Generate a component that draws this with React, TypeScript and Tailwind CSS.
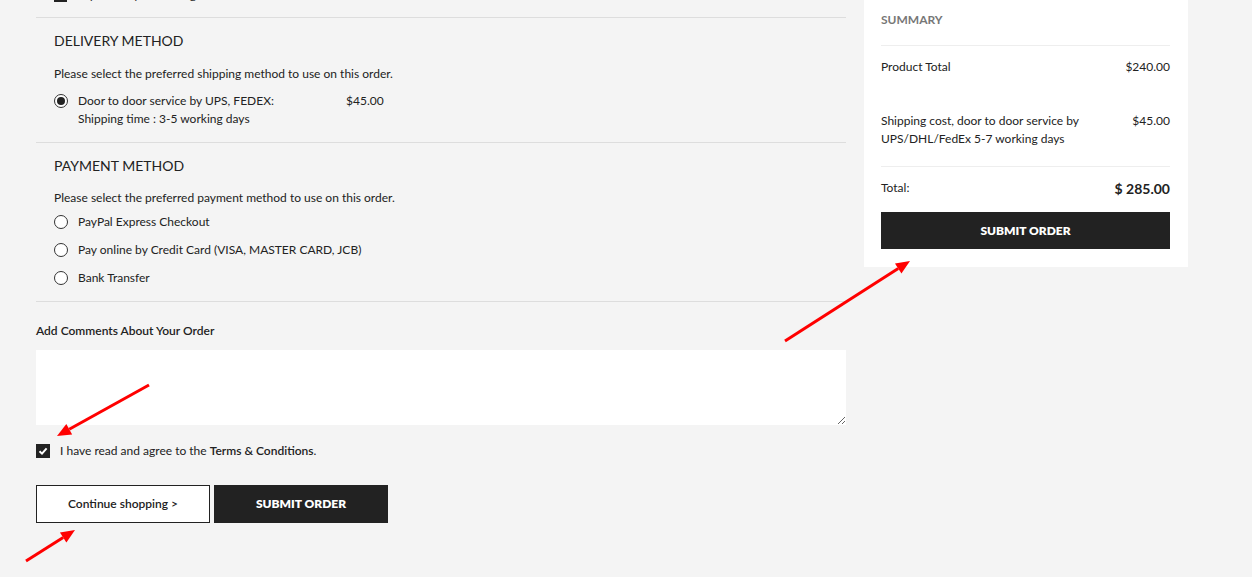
import React from 'react';

const Radio: React.FC<{ checked?: boolean }> = ({ checked }) => (
  <span className="mt-[2px] flex h-[14px] w-[14px] shrink-0 items-center justify-center rounded-full border border-[#333] bg-white">
    {checked && <span className="h-[8px] w-[8px] rounded-full bg-[#222]" />}
  </span>
);

const Arrow: React.FC<{ x1: number; y1: number; x2: number; y2: number }> = ({ x1, y1, x2, y2 }) => {
  const a = Math.atan2(y2 - y1, x2 - x1);
  const len = 14;
  const w = 6;
  const bx = x2 - len * Math.cos(a);
  const by = y2 - len * Math.sin(a);
  const px = -Math.sin(a) * w;
  const py = Math.cos(a) * w;
  return (
    <g>
      <line x1={x1} y1={y1} x2={bx} y2={by} stroke="#ff0000" strokeWidth="3" />
      <polygon points={`${x2},${y2} ${bx + px},${by + py} ${bx - px},${by - py}`} fill="#ff0000" />
    </g>
  );
};

const App: React.FC = () => {
  const payments = ['PayPal Express Checkout', 'Pay online by Credit Card (VISA, MASTER CARD, JCB)', 'Bank Transfer'];

  return (
    <div className="relative h-[577px] overflow-hidden bg-[#f4f4f4] text-[12px] leading-[18px] text-[#222]" style={{ fontFamily: 'Lato, "Open Sans", sans-serif' }}>
      <div className="flex items-start gap-[18px] pl-[36px]">
        {/* Left column */}
        <div className="w-[810px]">
          <div className="h-[18px] overflow-hidden border-b border-[#ddd]">
            <div className="-mt-[14px] flex items-center gap-[11px] pl-[18px]">
              <span className="h-[14px] w-[13px] bg-[#222]" />
              <span>My delivery and billing addresses are the same.</span>
            </div>
          </div>

          {/* Delivery */}
          <div className="border-b border-[#ddd] px-[18px] pb-[14px] pt-[13px]">
            <h2 className="text-[14px] leading-[20px] uppercase">Delivery Method</h2>
            <p className="mt-[14px]">Please select the preferred shipping method to use on this order.</p>
            <div className="mt-[9px] flex items-start gap-[10px]">
              <Radio checked />
              <div>
                <div className="flex">
                  <span className="w-[268px]">Door to door service by UPS, FEDEX:</span>
                  <span>$45.00</span>
                </div>
                <div>Shipping time : 3-5 working days</div>
              </div>
            </div>
          </div>

          {/* Payment */}
          <div className="border-b border-[#ddd] px-[18px] pb-[14px] pt-[13px]">
            <h2 className="text-[14px] leading-[20px] uppercase">Payment Method</h2>
            <p className="mt-[13px]">Please select the preferred payment method to use on this order.</p>
            <div className="mt-[6px] flex flex-col gap-[10px]">
              {payments.map((p) => (
                <label key={p} className="flex items-start gap-[10px]">
                  <Radio />
                  <span>{p}</span>
                </label>
              ))}
            </div>
          </div>

          {/* Comments */}
          <div className="mt-[20px] font-semibold">Add Comments About Your Order</div>
          <textarea className="mt-[10px] block h-[75px] w-full resize-y bg-white outline-none" />

          <label className="mt-[17px] flex items-center gap-[10px]">
            <span className="flex h-[14px] w-[14px] items-center justify-center bg-[#222]">
              <svg width="10" height="10" viewBox="0 0 10 10">
                <path d="M1.5 5.2 L4 7.6 L8.6 2.4" stroke="#fff" strokeWidth="2" fill="none" />
              </svg>
            </span>
            <span>
              I have read and agree to the <span className="font-semibold">Terms &amp; Conditions</span>.
            </span>
          </label>

          <div className="mt-[25px] flex gap-[4px]">
            <button className="h-[38px] w-[174px] border border-[#222] bg-white text-[12px] font-semibold">Continue shopping &gt;</button>
            <button className="h-[38px] w-[174px] bg-[#222] text-[12px] font-extrabold uppercase text-white">Submit Order</button>
          </div>
        </div>

        {/* Summary */}
        <div className="w-[324px] bg-white pb-[18px] pl-[17px] pr-[18px] pt-[11px]">
          <div className="mb-[16px] font-bold uppercase text-[#777]">Summary</div>
          <div className="border-t border-[#eee] pb-[18px] pt-[12px]">
            <div className="flex justify-between">
              <span>Product Total</span>
              <span>$240.00</span>
            </div>
            <div className="mt-[36px] flex justify-between gap-4">
              <span className="w-[215px]">Shipping cost, door to door service by UPS/DHL/FedEx 5-7 working days</span>
              <span>$45.00</span>
            </div>
          </div>
          <div className="flex items-start justify-between border-t border-[#eee] pt-[11px] leading-[20px]">
            <span>Total:</span>
            <span className="mt-[1px] text-[14px] font-bold">$ 285.00</span>
          </div>
          <button className="mt-[13px] h-[37px] w-full bg-[#222] text-[12px] font-extrabold uppercase text-white">Submit Order</button>
        </div>
      </div>

      <svg className="pointer-events-none absolute inset-0" width="1252" height="577">
        <Arrow x1={785} y1={341} x2={910} y2={261} />
        <Arrow x1={149} y1={385} x2={57} y2={436} />
        <Arrow x1={26} y1={561} x2={75} y2={530} />
      </svg>
    </div>
  );
};

export default App;
